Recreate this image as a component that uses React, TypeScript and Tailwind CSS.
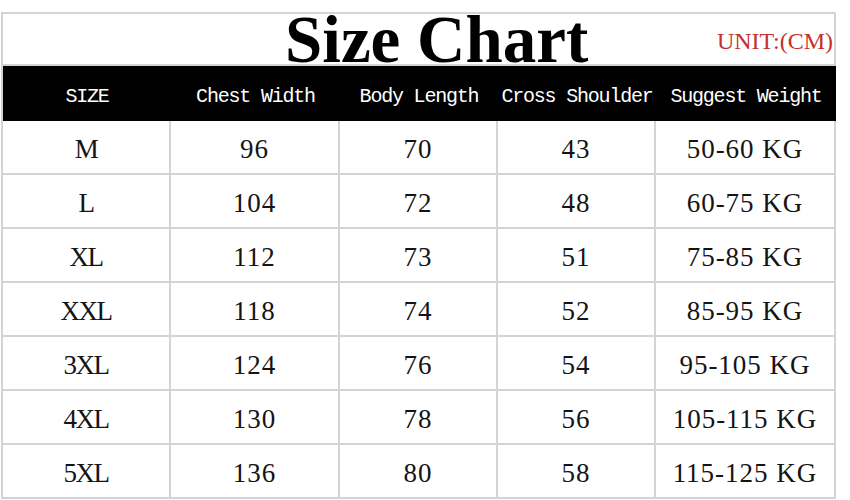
import React from "react";

const rows = [
  ["M", "96", "70", "43", "50-60 KG"],
  ["L", "104", "72", "48", "60-75 KG"],
  ["XL", "112", "73", "51", "75-85 KG"],
  ["XXL", "118", "74", "52", "85-95 KG"],
  ["3XL", "124", "76", "54", "95-105 KG"],
  ["4XL", "130", "78", "56", "105-115 KG"],
  ["5XL", "136", "80", "58", "115-125 KG"],
];

const headers = ["SIZE", "Chest Width", "Body Length", "Cross Shoulder", "Suggest Weight"];
const widths = ["w-[168px]", "w-[169px]", "w-[158px]", "w-[158px]", "w-[180px]"];

export default function App() {
  return (
    <div className="w-[850px] h-[500px] bg-white overflow-hidden">
      <div className="ml-px mt-[12px] w-[835px] border-t-2 border-l-2 border-[#d4d4d4]">
        <div className="h-[52px] border-b-2 border-r-2 border-[#d4d4d4] flex items-center relative">
          <div
            className="ml-[282px] leading-[50px] text-[67px] font-bold text-black whitespace-nowrap"
            style={{ fontFamily: '"Liberation Serif", serif' }}
          >
            Size Chart
          </div>
          <div
            className="ml-auto mr-[1px] pt-[3px] text-[24px] tracking-[0px] text-[#c4302b] whitespace-nowrap"
            style={{ fontFamily: '"Liberation Serif", serif' }}
          >
            UNIT:(CM)
          </div>
        </div>
        <div className="h-[55px] bg-black flex">
          {headers.map((h, i) => (
            <div
              key={h}
              className={`${widths[i]} flex items-center justify-center text-white text-[20px] tracking-[-1.2px] whitespace-nowrap pt-[7px]`}
              style={{ fontFamily: '"Liberation Mono", monospace' }}
            >
              {h}
            </div>
          ))}
        </div>
        {rows.map((r) => (
          <div key={r[0]} className="h-[54px] flex">
            {r.map((c, i) => (
              <div
                key={i}
                className={`${widths[i]} border-r-2 border-b-2 border-[#d4d4d4] flex items-center justify-center pt-[5px] text-[27px] text-[#141414] whitespace-nowrap ${i === 0 ? "tracking-[-1.5px]" : "tracking-[1px]"}`}
                style={{ fontFamily: '"Liberation Serif", serif' }}
              >
                {c}
              </div>
            ))}
          </div>
        ))}
      </div>
    </div>
  );
}
